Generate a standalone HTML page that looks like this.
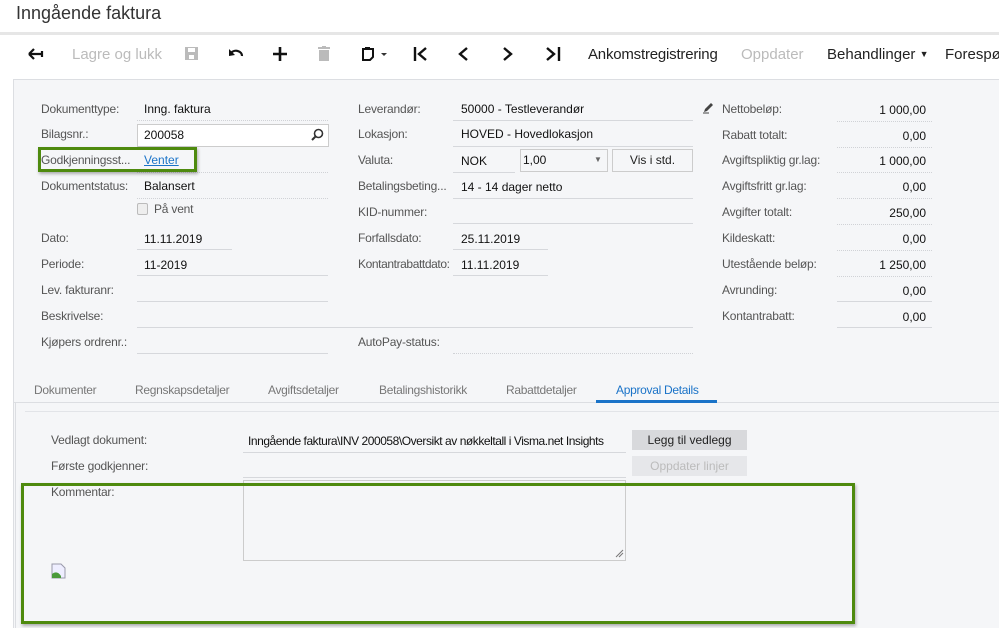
<!DOCTYPE html>
<html><head><meta charset="utf-8"><style>
*{margin:0;padding:0;box-sizing:border-box}
html,body{width:999px;height:628px;overflow:hidden}
body{background:#fff;font-family:"Liberation Sans",sans-serif;position:relative;color:#222}
.a{position:absolute;white-space:nowrap}
.l{position:absolute;font-size:12px;color:#555;white-space:nowrap;letter-spacing:-0.2px}
.v{position:absolute;font-size:12px;color:#111;white-space:nowrap}
.u{position:absolute;height:1px;background:#d6d8dc}
.d{position:absolute;height:0;border-top:1px dotted #d0d2d6}
.tb{position:absolute;top:46px;font-size:15px;color:#222;white-space:nowrap}
.tab{position:absolute;top:383px;font-size:12px;color:#777;letter-spacing:-0.3px}
.r{position:absolute;font-size:12px;color:#111;text-align:right;width:90px}
</style></head><body>
<div class="a" style="left:16px;top:3px;font-size:18px;color:#333">Inngående faktura</div>
<div class="a" style="left:0;top:32px;width:999px;height:3px;background:#e6e6e6"></div>
<svg class="a" style="left:27px;top:46px" width="18" height="16" viewBox="0 0 18 16"><path d="M2 8H15M2 8L7 3M2 8L7 13M15 5V11" stroke="#111" stroke-width="2.2" fill="none"/></svg>
<div class="tb" style="left:72px;color:#bbb">Lagre og lukk</div>
<svg class="a" style="left:184px;top:46px" width="15" height="15" viewBox="0 0 15 15"><rect x="1" y="1" width="13" height="13" fill="#bbb"/><rect x="4" y="2" width="7" height="4" fill="#fff"/><rect x="5" y="9" width="5" height="4" fill="#fff"/></svg>
<svg class="a" style="left:228px;top:46px" width="16" height="14" viewBox="0 0 16 14"><path d="M3 7A6 5 0 0 1 14 10" stroke="#111" stroke-width="2.2" fill="none"/><path d="M1 3L1 10L7 9Z" fill="#111"/></svg>
<svg class="a" style="left:273px;top:47px" width="14" height="14" viewBox="0 0 14 14"><path d="M7 0V14M0 7H14" stroke="#111" stroke-width="2.6"/></svg>
<svg class="a" style="left:317px;top:46px" width="14" height="16" viewBox="0 0 14 16"><rect x="1" y="1" width="12" height="2" fill="#bbb"/><rect x="5" y="0" width="4" height="2" fill="#bbb"/><rect x="2" y="4" width="10" height="11" fill="#bbb"/></svg>
<svg class="a" style="left:361px;top:45px" width="30" height="18" viewBox="0 0 30 18"><path d="M2 4H12V12L9 15H2Z" stroke="#111" stroke-width="2" fill="none"/><rect x="4" y="2" width="5" height="3" fill="#111"/><path d="M20 8H26L23 11Z" fill="#333"/></svg>
<svg class="a" style="left:413px;top:46px" width="16" height="16" viewBox="0 0 16 16"><path d="M2 1V15M13 2L6 8L13 14" stroke="#111" stroke-width="2.4" fill="none"/></svg>
<svg class="a" style="left:457px;top:46px" width="12" height="16" viewBox="0 0 12 16"><path d="M10 2L3 8L10 14" stroke="#111" stroke-width="2.4" fill="none"/></svg>
<svg class="a" style="left:502px;top:46px" width="12" height="16" viewBox="0 0 12 16"><path d="M2 2L9 8L2 14" stroke="#111" stroke-width="2.4" fill="none"/></svg>
<svg class="a" style="left:545px;top:46px" width="16" height="16" viewBox="0 0 16 16"><path d="M2 2L9 8L2 14M14 1V15" stroke="#111" stroke-width="2.4" fill="none"/></svg>
<div class="tb" style="left:588px;letter-spacing:-0.2px">Ankomstregistrering</div>
<div class="tb" style="left:741px;color:#bbb">Oppdater</div>
<div class="tb" style="left:827px">Behandlinger <span style="font-size:9px;position:relative;top:-2px">▼</span></div>
<div class="tb" style="left:945px">Forespørsler</div>
<div class="a" style="left:13px;top:79px;width:990px;height:549px;background:#f5f6f8;border:1px solid #dcdee2;border-bottom:none"></div>
<div class="l" style="left:41px;top:102px">Dokumenttype:</div><div class="v" style="left:144px;top:102px">Inng. faktura</div><div class="d" style="left:137px;top:120px;width:191px"></div>
<div class="l" style="left:41px;top:127px">Bilagsnr.:</div>
<div class="a" style="left:137px;top:124px;width:192px;height:23px;background:#fff;border:1px solid #ccc"></div>
<div class="v" style="left:144px;top:128px">200058</div>
<svg class="a" style="left:311px;top:128px" width="13" height="13" viewBox="0 0 13 13"><circle cx="7.5" cy="5.5" r="4" stroke="#333" stroke-width="1.6" fill="none"/><path d="M4.5 8.5L1 12" stroke="#333" stroke-width="2"/></svg>
<div class="l" style="left:41px;top:153px">Godkjenningsst...</div><div class="v" style="left:144px;top:153px;color:#1a73c8;text-decoration:underline">Venter</div><div class="d" style="left:137px;top:172px;width:191px"></div>
<div class="a" style="left:38px;top:147px;width:159px;height:25px;border:3px solid #4e8a0e;box-shadow:1px 2px 3px rgba(0,0,0,.3)"></div>
<div class="l" style="left:41px;top:179px">Dokumentstatus:</div><div class="v" style="left:144px;top:179px">Balansert</div><div class="d" style="left:137px;top:198px;width:191px"></div>
<div class="a" style="left:137px;top:203px;width:11px;height:12px;border:1px solid #bbb;border-radius:2px;background:#eee"></div><div class="l" style="left:154px;top:202px">På vent</div>
<div class="l" style="left:41px;top:231px">Dato:</div><div class="v" style="left:144px;top:232px">11.11.2019</div><div class="u" style="left:137px;top:249px;width:95px"></div>
<div class="l" style="left:41px;top:257px">Periode:</div><div class="v" style="left:144px;top:258px">11-2019</div><div class="u" style="left:137px;top:275px;width:191px"></div>
<div class="l" style="left:41px;top:283px">Lev. fakturanr:</div><div class="u" style="left:137px;top:301px;width:191px"></div>
<div class="l" style="left:41px;top:309px">Beskrivelse:</div><div class="u" style="left:137px;top:327px;width:556px"></div>
<div class="l" style="left:41px;top:335px">Kjøpers ordrenr.:</div><div class="u" style="left:137px;top:353px;width:191px"></div>
<div class="l" style="left:358px;top:102px">Leverandør:</div><div class="v" style="left:461px;top:102px">50000 - Testleverandør</div><div class="u" style="left:453px;top:120px;width:240px"></div>
<div class="l" style="left:358px;top:127px">Lokasjon:</div><div class="v" style="left:461px;top:127px">HOVED - Hovedlokasjon</div><div class="u" style="left:453px;top:146px;width:240px"></div>
<div class="l" style="left:358px;top:153px">Valuta:</div><div class="v" style="left:461px;top:154px">NOK</div><div class="u" style="left:453px;top:172px;width:62px"></div>
<div class="a" style="left:520px;top:149px;width:88px;height:23px;border:1px solid #ccc;background:#f5f6f8"></div><div class="v" style="left:523px;top:153px">1,00</div><div class="a" style="left:594px;top:155px;font-size:8px;color:#666">▼</div>
<div class="a" style="left:612px;top:149px;width:81px;height:23px;border:1px solid #ccc;background:#f5f6f8;font-size:12px;text-align:center;line-height:20px">Vis i std.</div>
<div class="l" style="left:358px;top:179px">Betalingsbeting...</div><div class="v" style="left:461px;top:180px">14 - 14 dager netto</div><div class="u" style="left:453px;top:198px;width:240px"></div>
<div class="l" style="left:358px;top:205px">KID-nummer:</div><div class="u" style="left:453px;top:223px;width:240px"></div>
<div class="l" style="left:358px;top:231px">Forfallsdato:</div><div class="v" style="left:461px;top:232px">25.11.2019</div><div class="u" style="left:453px;top:249px;width:95px"></div>
<div class="l" style="left:358px;top:257px;letter-spacing:-0.4px">Kontantrabattdato:</div><div class="v" style="left:461px;top:258px">11.11.2019</div><div class="u" style="left:453px;top:275px;width:95px"></div>
<div class="l" style="left:358px;top:335px">AutoPay-status:</div><div class="d" style="left:453px;top:353px;width:240px"></div>
<svg class="a" style="left:702px;top:102px" width="13" height="12" viewBox="0 0 13 12"><path d="M2 10L3 7L9 1L11 3L5 9Z" fill="#444"/><path d="M1 11H7" stroke="#444"/></svg>
<div class="l" style="left:722px;top:102px">Nettobeløp:</div><div class="r" style="left:836px;top:103px">1 000,00</div><div class="d" style="left:837px;top:121px;width:95px"></div>
<div class="l" style="left:722px;top:128px">Rabatt totalt:</div><div class="r" style="left:836px;top:129px">0,00</div><div class="d" style="left:837px;top:147px;width:95px"></div>
<div class="l" style="left:722px;top:153px">Avgiftspliktig gr.lag:</div><div class="r" style="left:836px;top:154px">1 000,00</div><div class="d" style="left:837px;top:172px;width:95px"></div>
<div class="l" style="left:722px;top:179px">Avgiftsfritt gr.lag:</div><div class="r" style="left:836px;top:180px">0,00</div><div class="d" style="left:837px;top:198px;width:95px"></div>
<div class="l" style="left:722px;top:205px">Avgifter totalt:</div><div class="r" style="left:836px;top:206px">250,00</div><div class="d" style="left:837px;top:224px;width:95px"></div>
<div class="l" style="left:722px;top:231px">Kildeskatt:</div><div class="r" style="left:836px;top:232px">0,00</div><div class="d" style="left:837px;top:250px;width:95px"></div>
<div class="l" style="left:722px;top:257px">Utestående beløp:</div><div class="r" style="left:836px;top:258px">1 250,00</div><div class="d" style="left:837px;top:276px;width:95px"></div>
<div class="l" style="left:722px;top:283px">Avrunding:</div><div class="r" style="left:836px;top:284px">0,00</div><div class="u" style="left:837px;top:301px;width:95px"></div>
<div class="l" style="left:722px;top:309px">Kontantrabatt:</div><div class="r" style="left:836px;top:310px">0,00</div><div class="u" style="left:837px;top:327px;width:95px"></div>
<div class="tab" style="left:34px">Dokumenter</div>
<div class="tab" style="left:135px">Regnskapsdetaljer</div>
<div class="tab" style="left:268px">Avgiftsdetaljer</div>
<div class="tab" style="left:379px">Betalingshistorikk</div>
<div class="tab" style="left:506px">Rabattdetaljer</div>
<div class="tab" style="left:616px;color:#1a73c8">Approval Details</div>
<div class="a" style="left:13px;top:402px;width:986px;height:1px;background:#dcdee2"></div>
<div class="a" style="left:596px;top:400px;width:121px;height:3px;background:#1a73c8"></div>
<div class="a" style="left:15px;top:403px;width:1px;height:225px;background:#dcdee2"></div>
<div class="a" style="left:25px;top:411px;width:974px;height:1px;background:#e2e4e8"></div>
<div class="l" style="left:51px;top:433px">Vedlagt dokument:</div>
<div class="v" style="left:248px;top:434px;letter-spacing:-0.45px">Inngående faktura\INV 200058\Oversikt av nøkkeltall i Visma.net Insights</div>
<div class="u" style="left:243px;top:452px;width:383px"></div>
<div class="a" style="left:632px;top:430px;width:115px;height:20px;background:#d8d9dc;font-size:12px;text-align:center;line-height:20px;color:#222">Legg til vedlegg</div>
<div class="l" style="left:51px;top:459px">Første godkjenner:</div>
<div class="u" style="left:243px;top:477px;width:383px"></div>
<div class="a" style="left:632px;top:456px;width:115px;height:20px;background:#e6e7ea;font-size:12px;text-align:center;line-height:20px;color:#bbb">Oppdater linjer</div>
<div class="l" style="left:51px;top:485px">Kommentar:</div>
<div class="a" style="left:243px;top:480px;width:383px;height:81px;border:1px solid #ccc;background:#f5f6f8"></div>
<svg class="a" style="left:615px;top:549px" width="9" height="9" viewBox="0 0 9 9"><path d="M1 8L8 1M4 8L8 4" stroke="#777"/></svg>
<svg class="a" style="left:51px;top:563px" width="15" height="16" viewBox="0 0 15 16"><path d="M1 1H10L14 5V15H1Z" fill="#eef" stroke="#99a"/><path d="M1 15L1 11Q6 7 10 13L10 15Z" fill="#4a9a3a"/></svg>
<div class="a" style="left:21px;top:483px;width:834px;height:141px;border:3px solid #4e8a0e;box-shadow:1px 2px 3px rgba(0,0,0,.3)"></div>
</body></html>
